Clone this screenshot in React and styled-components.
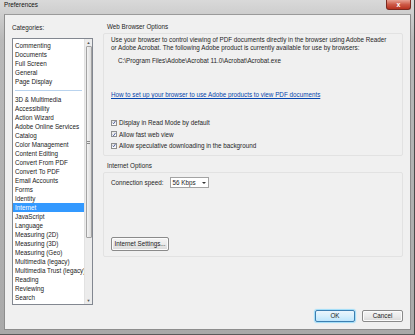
import styled, { createGlobalStyle } from 'styled-components';

const GlobalStyle = createGlobalStyle`
  html, body {
    margin: 0;
    padding: 0;
    background: #ffffff;
  }
  body {
    font-family: "Liberation Sans", Arial, sans-serif;
    font-size: 6.3px;
    color: #1e1e1e;
  }
`;

const Window = styled.div`
  width: 415px;
  height: 335px;
  display: flex;
  flex-direction: column;
  background: linear-gradient(#d9d9d9, #b9b9b9 40px, #a9a9a9);
  box-sizing: border-box;
  border-right: 1px solid #4a4a4a;
  border-bottom: 1px solid #5a5a5a;
`;

const TitleBar = styled.div`
  height: 14px;
  flex: none;
  display: flex;
  align-items: flex-start;
  justify-content: space-between;
  padding-left: 4px;
`;

const Title = styled.span`
  font-size: 6.3px;
  line-height: 10px;
  color: #111;
`;

const CloseButton = styled.div`
  width: 23px;
  height: 9px;
  margin-right: 3px;
  border: 1px solid #7b2a20;
  border-top: none;
  border-radius: 0 0 3px 3px;
  background: linear-gradient(#e8a293, #cd5a47 50%, #b8321f);
  display: flex;
  align-items: center;
  justify-content: center;
  color: #fff;
  font-size: 7px;
  font-weight: bold;
  line-height: 1;
`;

const Client = styled.div`
  flex: 1;
  margin: 0 3px 4px 4px;
  background: #f0f0f0;
  border: 1px solid #8d8d8d;
  border-top-color: #9a9a9a;
  display: flex;
  flex-direction: column;
`;

const Main = styled.div`
  display: flex;
  padding-left: 7px;
  gap: 10px;
`;

const LeftColumn = styled.div`
  width: 81px;
  display: flex;
  flex-direction: column;
  padding-top: 9px;
`;

const Label = styled.div`
  line-height: 8px;
  height: 8px;
  margin-bottom: ${({ $gap }) => $gap || 0}px;
  padding-left: ${({ $indent }) => $indent || 0}px;
  color: #1e1e1e;
`;

const ListBox = styled.div`
  height: 267px;
  box-sizing: border-box;
  border: 1px solid #828790;
  background: #fff;
  display: flex;
  overflow: hidden;
`;

const Items = styled.div`
  flex: 1;
  padding-top: 2px;
  overflow: hidden;
`;

const Item = styled.div`
  height: 9px;
  line-height: 9px;
  padding-left: 2px;
  white-space: nowrap;
  color: ${({ $selected }) => ($selected ? '#fff' : '#1a1a1a')};
  background: ${({ $selected }) => ($selected ? '#3399ff' : 'transparent')};
`;

const Separator = styled.div`
  height: 9px;
  display: flex;
  align-items: center;
  padding: 0 2px;
  &::after {
    content: '';
    flex: 1;
    height: 1px;
    background: #b9d3ee;
  }
`;

const ScrollBar = styled.div`
  width: 7px;
  flex: none;
  background: #ececec;
  border-left: 1px solid #e2e2e2;
  display: flex;
  flex-direction: column;
`;

const Arrow = styled.div`
  height: 7px;
  display: flex;
  align-items: center;
  justify-content: center;
  font-size: 4px;
  color: #555;
`;

const Thumb = styled.div`
  height: 190px;
  margin: 0 0.5px;
  border: 1px solid #a3a3a3;
  border-radius: 1px;
  background: linear-gradient(90deg, #f4f4f4, #dcdcdc);
  display: flex;
  align-items: center;
  justify-content: center;
`;

const Grip = styled.div`
  width: 3px;
  height: 3px;
  border-top: 1px solid #8a8a8a;
  border-bottom: 1px solid #8a8a8a;
  box-sizing: border-box;
`;

const Spacer = styled.div`
  flex: 1;
`;

const RightColumn = styled.div`
  width: 300px;
  display: flex;
  flex-direction: column;
  padding-top: 8px;
`;

const GroupBox = styled.div`
  border: 1px solid #e2e2e2;
  border-radius: 2px;
  box-sizing: border-box;
  height: ${({ $height }) => $height}px;
  padding: ${({ $pad }) => $pad}px 0 0 6px;
  margin-top: 2px;
  display: flex;
  flex-direction: column;
`;

const Paragraph = styled.div`
  line-height: 8px;
  padding-left: 1px;
`;

const Path = styled.div`
  line-height: 8px;
  margin-top: 5px;
  padding-left: 8px;
`;

const Link = styled.a`
  display: block;
  line-height: 8px;
  margin-top: 26px;
  padding-left: 1px;
  color: #0645ad;
  text-decoration: underline;
`;

const CheckList = styled.div`
  margin-top: 18px;
  display: flex;
  flex-direction: column;
`;

const CheckRow = styled.div`
  height: 11.5px;
  display: flex;
  align-items: center;
  gap: 2px;
  padding-left: 1px;
`;

const Box = styled.span`
  width: 6px;
  height: 6px;
  box-sizing: border-box;
  border: 1px solid #8e8f8f;
  background: linear-gradient(#e6e6e6, #ffffff);
  display: flex;
  align-items: center;
  justify-content: center;
`;

const SubTitle = styled.div`
  line-height: 8px;
  margin-top: 6px;
  padding-left: 4px;
`;

const Row = styled.div`
  display: flex;
  align-items: center;
  gap: 6px;
  padding-left: 1px;
`;

const Select = styled.div`
  width: 39px;
  height: 11px;
  box-sizing: border-box;
  border: 1px solid #a3a3a3;
  background: #fff;
  display: flex;
  align-items: center;
  justify-content: space-between;
  padding: 0 2px 0 2px;
`;

const Caret = styled.span`
  width: 0;
  height: 0;
  border-left: 2px solid transparent;
  border-right: 2px solid transparent;
  border-top: 2px solid #333;
`;

const Button = styled.div`
  width: ${({ $width }) => $width}px;
  height: ${({ $height }) => $height || 12}px;
  box-sizing: border-box;
  border: 1px solid ${({ $primary }) => ($primary ? '#3c7fb1' : '#8a8a8a')};
  border-radius: 2px;
  background: ${({ $primary }) => ($primary
    ? 'linear-gradient(#eaf6fd, #d7effc 50%, #bde6fd)'
    : 'linear-gradient(#f4f4f4, #ebebeb 50%, #d9d9d9)')};
  box-shadow: ${({ $primary }) => ($primary ? '0 0 1px 1px #9ddcf9' : 'inset 0 0 0 1px #fbfbfb')};
  display: flex;
  align-items: center;
  justify-content: center;
  line-height: 1;
  color: #1a1a1a;
`;

const Footer = styled.div`
  margin-top: auto;
  display: flex;
  justify-content: flex-end;
  gap: 7px;
  padding: 0 7px 7px 0;
`;

const categories = [
  'Commenting', 'Documents', 'Full Screen', 'General', 'Page Display', null,
  '3D & Multimedia', 'Accessibility', 'Action Wizard', 'Adobe Online Services',
  'Catalog', 'Color Management', 'Content Editing', 'Convert From PDF',
  'Convert To PDF', 'Email Accounts', 'Forms', 'Identity', 'Internet',
  'JavaScript', 'Language', 'Measuring (2D)', 'Measuring (3D)', 'Measuring (Geo)',
  'Multimedia (legacy)', 'Multimedia Trust (legacy)', 'Reading', 'Reviewing',
  'Search', 'Security',
];

const options = [
  'Display in Read Mode by default',
  'Allow fast web view',
  'Allow speculative downloading in the background',
];

function Check() {
  return (
    <svg width="5" height="5" viewBox="0 0 10 10">
      <path d="M1.5 5.5 L4 8 L8.5 1.5" fill="none" stroke="#2b3f8c" strokeWidth="2" />
    </svg>
  );
}

export default function App() {
  return (
    <>
      <GlobalStyle />
      <Window>
        <TitleBar>
          <Title>Preferences</Title>
          <CloseButton>x</CloseButton>
        </TitleBar>
        <Client>
          <Main>
            <LeftColumn>
              <Label $gap={6}>Categories:</Label>
              <ListBox>
                <Items>
                  {categories.map((name, i) => (name === null
                    ? <Separator key={`sep-${i}`} />
                    : <Item key={name} $selected={name === 'Internet'}>{name}</Item>))}
                </Items>
                <ScrollBar>
                  <Arrow>▲</Arrow>
                  <Thumb><Grip /></Thumb>
                  <Spacer />
                  <Arrow>▼</Arrow>
                </ScrollBar>
              </ListBox>
            </LeftColumn>
            <RightColumn>
              <Label $indent={4}>Web Browser Options</Label>
              <GroupBox $height={123} $pad={2}>
                <Paragraph>
                  Use your browser to control viewing of PDF documents directly in the browser using Adobe Reader
                  <br />
                  or Adobe Acrobat. The following Adobe product is currently available for use by browsers:
                </Paragraph>
                <Path>C:\Program Files\Adobe\Acrobat 11.0\Acrobat\Acrobat.exe</Path>
                <Link href="#">How to set up your browser to use Adobe products to view PDF documents</Link>
                <CheckList>
                  {options.map((text) => (
                    <CheckRow key={text}>
                      <Box><Check /></Box>
                      <span>{text}</span>
                    </CheckRow>
                  ))}
                </CheckList>
              </GroupBox>
              <SubTitle>Internet Options</SubTitle>
              <GroupBox $height={85} $pad={4}>
                <Row>
                  <span>Connection speed:</span>
                  <Select>
                    <span>56 Kbps</span>
                    <Caret />
                  </Select>
                </Row>
                <Spacer />
                <Row>
                  <Button $width={58} $height={14}>Internet Settings...</Button>
                </Row>
                <div style={{ height: 5 }} />
              </GroupBox>
            </RightColumn>
          </Main>
          <Footer>
            <Button $width={40} $primary>OK</Button>
            <Button $width={41}>Cancel</Button>
          </Footer>
        </Client>
      </Window>
    </>
  );
}
